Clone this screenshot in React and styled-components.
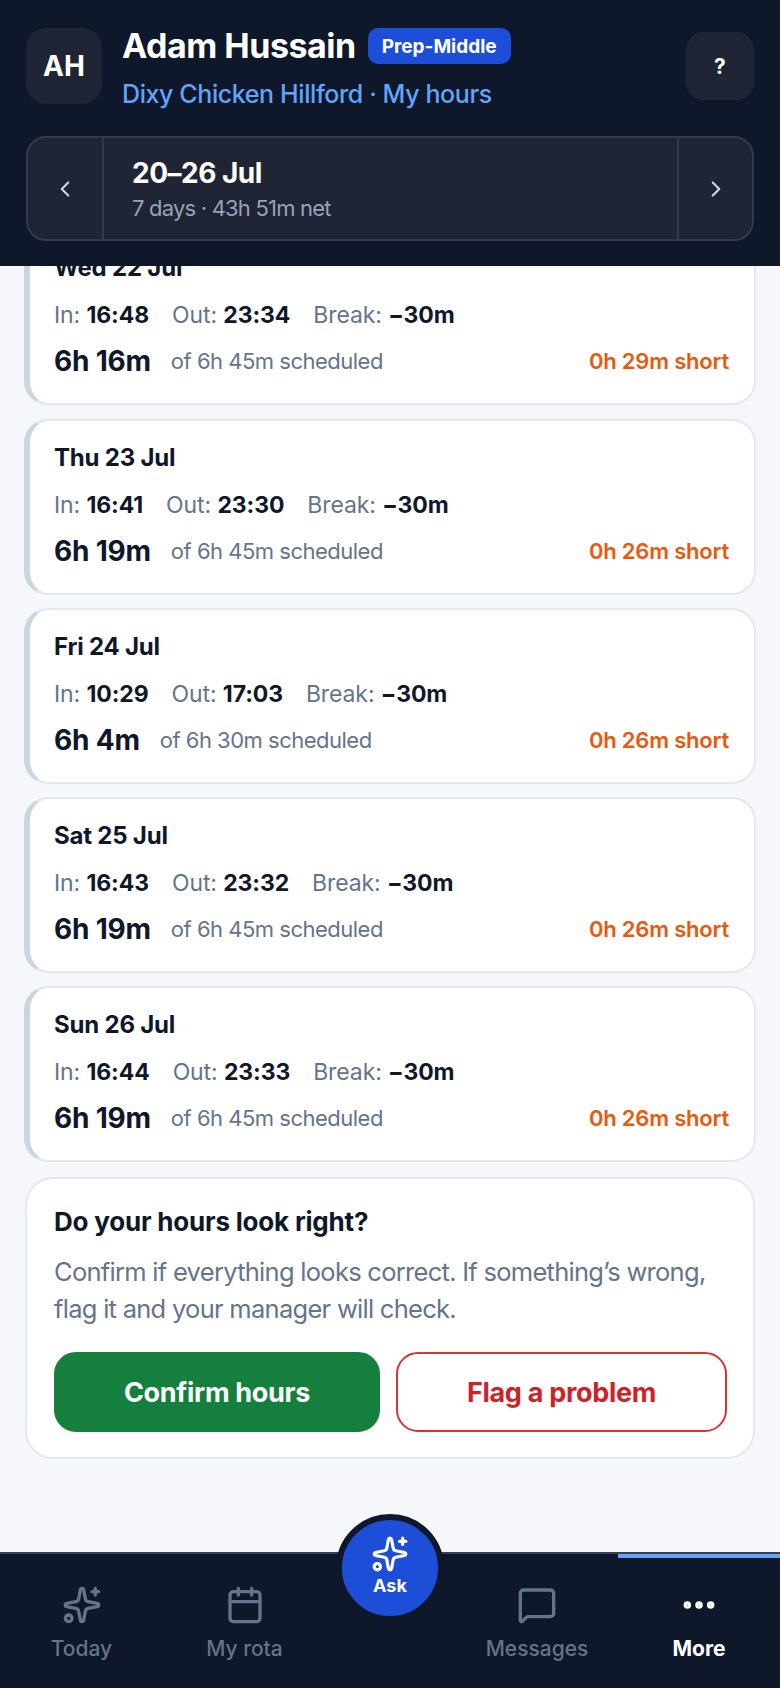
import React from 'react'
import styled, { createGlobalStyle } from 'styled-components'
import { Sparkles, Calendar, MessageSquare, Ellipsis, ChevronLeft, ChevronRight } from 'lucide-react'

const GlobalStyle = createGlobalStyle`
  html, body { margin: 0; padding: 0; height: 100%; }
  * { box-sizing: border-box; }
  body { font-family: 'Inter', 'Liberation Sans', sans-serif; background: #f5f7fb; }
`

const Screen = styled.div`
  width: 780px;
  height: 1688px;
  display: flex;
  flex-direction: column;
  overflow: hidden;
  position: relative;
  background: #f5f7fb;
`

const Header = styled.header`
  flex: none;
  height: 266px;
  background: #0f172a;
  padding: 28px 26px 25px;
  display: flex;
  flex-direction: column;
  gap: 32px;
`

const TopRow = styled.div`
  display: flex;
  align-items: center;
  height: 76px;
`

const Avatar = styled.div`
  width: 76px;
  height: 76px;
  border-radius: 20px;
  background: #1f2535;
  color: #fff;
  font-size: 28px;
  font-weight: 700;
  display: flex;
  align-items: center;
  justify-content: center;
`

const Who = styled.div`
  flex: 1;
  align-self: flex-start;
  margin-left: 20px;
  display: flex;
  flex-direction: column;
  gap: 14.5px;
`

const NameRow = styled.div`
  display: flex;
  align-items: center;
  gap: 12px;
`

const Name = styled.div`
  color: #fff;
  font-size: 34px;
  font-weight: 700;
  letter-spacing: -0.5px;
  line-height: 36px;
`

const Badge = styled.span`
  background: #1d4ed8;
  color: #fff;
  font-size: 19px;
  font-weight: 700;
  height: 36px;
  padding: 0 14px;
  border-radius: 10px;
  display: flex;
  align-items: center;
`

const Place = styled.div`
  color: #60a5fa;
  font-size: 25px;
  font-weight: 500;
  letter-spacing: -0.4px;
  line-height: 30px;
`

const HelpButton = styled.button`
  width: 68px;
  height: 68px;
  border: none;
  border-radius: 18px;
  background: #1f2535;
  color: #fff;
  font-family: inherit;
  font-size: 21px;
  font-weight: 700;
`

const WeekBar = styled.div`
  height: 105px;
  border: 2px solid #333a49;
  border-radius: 20px;
  background: #1f2535;
  display: flex;
  align-items: stretch;
  overflow: hidden;
`

const WeekArrow = styled.div`
  width: ${p => (p.$side === 'left' ? '76px' : '75px')};
  flex: none;
  display: flex;
  align-items: center;
  justify-content: center;
  color: #cbd5e1;
  border-${p => (p.$side === 'left' ? 'right' : 'left')}: 2px solid #333a49;
`

const WeekInfo = styled.div`
  flex: 1;
  padding-left: 28px;
  display: flex;
  flex-direction: column;
  justify-content: center;
  gap: 4px;
`

const WeekTitle = styled.div`
  color: #fff;
  font-size: 28px;
  font-weight: 700;
  letter-spacing: -0.5px;
  line-height: 34px;
`

const WeekSub = styled.div`
  color: #94a3b8;
  font-size: 22px;
  letter-spacing: -0.8px;
  line-height: 28px;
`

const Main = styled.main`
  flex: 1;
  min-height: 0;
  overflow: hidden;
  display: flex;
  flex-direction: column;
  justify-content: flex-end;
  gap: 13.33px;
  padding: 0 24px 93px;
`

const Card = styled.section`
  flex: none;
  height: 176px;
  background: #fff;
  border: 2px solid #e2e8f0;
  border-left: 6px solid #cbd5e1;
  border-radius: 24px;
  padding: 0 25px 0 24px;
  display: flex;
  flex-direction: column;
`

const CardDate = styled.div`
  margin-top: 19px;
  font-size: 24px;
  letter-spacing: -0.2px;
  line-height: 36px;
  font-weight: 700;
  color: #0f172a;
`

const Times = styled.div`
  margin-top: 11px;
  display: flex;
  gap: 23px;
  font-size: 23px;
  letter-spacing: -0.1px;
  line-height: 36px;
  color: #64748b;
`

const TimeValue = styled.b`
  font-weight: 700;
  color: #0f172a;
`

const TotalRow = styled.div`
  margin-top: 10px;
  display: flex;
  align-items: center;
  line-height: 36px;
`

const Total = styled.div`
  font-size: 28px;
  font-weight: 700;
  letter-spacing: -0.2px;
  color: #0f172a;
`

const Scheduled = styled.div`
  margin-left: 20px;
  flex: 1;
  font-size: 22px;
  letter-spacing: -0.5px;
  color: #64748b;
`

const Short = styled.div`
  font-size: 22px;
  font-weight: 600;
  letter-spacing: -0.2px;
  color: #ea580c;
`

const Feedback = styled.section`
  flex: none;
  margin: 1.2px 1px 0;
  height: 282px;
  background: #fff;
  border: 2px solid #e2e8f0;
  border-radius: 28px;
  padding: 26px 27px;
`

const FeedbackTitle = styled.div`
  font-size: 26px;
  font-weight: 700;
  letter-spacing: -0.2px;
  line-height: 34px;
  color: #0f172a;
`

const FeedbackText = styled.p`
  margin: 14px 0 25px;
  font-size: 25.5px;
  letter-spacing: -0.72px;
  line-height: 37px;
  color: #64748b;
`

const Actions = styled.div`
  display: grid;
  grid-template-columns: 326px 331px;
  gap: 16px;
`

const ActionButton = styled.button`
  height: 80px;
  border-radius: 22px;
  font-family: inherit;
  font-size: 27px;
  font-weight: 700;
  letter-spacing: -0.3px;
  border: 2px solid ${p => (p.$danger ? '#d63333' : '#15803d')};
  background: ${p => (p.$danger ? '#fff' : '#15803d')};
  color: ${p => (p.$danger ? '#cf2226' : '#fff')};
`

const Nav = styled.nav`
  flex: none;
  position: relative;
  height: 136px;
  background: #0f172a;
  border-top: 2px solid #334155;
  display: grid;
  grid-template-columns: 163px 163px 130px 162px 162px;
`

const NavItem = styled.div`
  position: relative;
  display: flex;
  flex-direction: column;
  align-items: center;
  padding-top: 31px;
  gap: 9px;
  color: ${p => (p.$active ? '#fff' : '#64748b')};
  font-size: 21px;
  font-weight: ${p => (p.$active ? 700 : 500)};
  line-height: 30px;

  ${p => p.$active && `
    &::before {
      content: '';
      position: absolute;
      top: 0;
      left: 0;
      right: 0;
      height: 4px;
      background: #60a5fa;
    }
  `}
`

const AskButton = styled.div`
  position: absolute;
  left: 336px;
  top: -40px;
  width: 108px;
  height: 108px;
  border-radius: 50%;
  background: #1d4ed8;
  border: 6px solid #0f172a;
  color: #fff;
  display: flex;
  flex-direction: column;
  align-items: center;
  padding-top: 15px;
  font-size: 18px;
  font-weight: 700;
  line-height: 22px;
  gap: 2px;
`

const shifts = [
  { day: 'Wed 22 Jul', in: '16:48', out: '23:34', total: '6h 16m', of: '6h 45m', short: '0h 29m' },
  { day: 'Thu 23 Jul', in: '16:41', out: '23:30', total: '6h 19m', of: '6h 45m', short: '0h 26m' },
  { day: 'Fri 24 Jul', in: '10:29', out: '17:03', total: '6h 4m', of: '6h 30m', short: '0h 26m' },
  { day: 'Sat 25 Jul', in: '16:43', out: '23:32', total: '6h 19m', of: '6h 45m', short: '0h 26m' },
  { day: 'Sun 26 Jul', in: '16:44', out: '23:33', total: '6h 19m', of: '6h 45m', short: '0h 26m' },
]

export default function App() {
  return (
    <Screen>
      <GlobalStyle />
      <Header>
        <TopRow>
          <Avatar>AH</Avatar>
          <Who>
            <NameRow>
              <Name>Adam Hussain</Name>
              <Badge>Prep-Middle</Badge>
            </NameRow>
            <Place>Dixy Chicken Hillford · My hours</Place>
          </Who>
          <HelpButton>?</HelpButton>
        </TopRow>
        <WeekBar>
          <WeekArrow $side="left"><ChevronLeft size={26} /></WeekArrow>
          <WeekInfo>
            <WeekTitle>20–26 Jul</WeekTitle>
            <WeekSub>7 days · 43h 51m net</WeekSub>
          </WeekInfo>
          <WeekArrow $side="right"><ChevronRight size={26} /></WeekArrow>
        </WeekBar>
      </Header>
      <Main>
        {shifts.map(s => (
          <Card key={s.day}>
            <CardDate>{s.day}</CardDate>
            <Times>
              <span>In: <TimeValue>{s.in}</TimeValue></span>
              <span>Out: <TimeValue>{s.out}</TimeValue></span>
              <span>Break: <TimeValue>−30m</TimeValue></span>
            </Times>
            <TotalRow>
              <Total>{s.total}</Total>
              <Scheduled>of {s.of} scheduled</Scheduled>
              <Short>{s.short} short</Short>
            </TotalRow>
          </Card>
        ))}
        <Feedback>
          <FeedbackTitle>Do your hours look right?</FeedbackTitle>
          <FeedbackText>Confirm if everything looks correct. If something’s wrong, flag it and your manager will check.</FeedbackText>
          <Actions>
            <ActionButton>Confirm hours</ActionButton>
            <ActionButton $danger>Flag a problem</ActionButton>
          </Actions>
        </Feedback>
      </Main>
      <Nav>
        <NavItem><Sparkles size={40} strokeWidth={2} />Today</NavItem>
        <NavItem><Calendar size={40} strokeWidth={2} />My rota</NavItem>
        <div />
        <NavItem><MessageSquare size={40} strokeWidth={2} />Messages</NavItem>
        <NavItem $active><Ellipsis size={40} strokeWidth={2.5} />More</NavItem>
        <AskButton><Sparkles size={38} strokeWidth={2} />Ask</AskButton>
      </Nav>
    </Screen>
  )
}
